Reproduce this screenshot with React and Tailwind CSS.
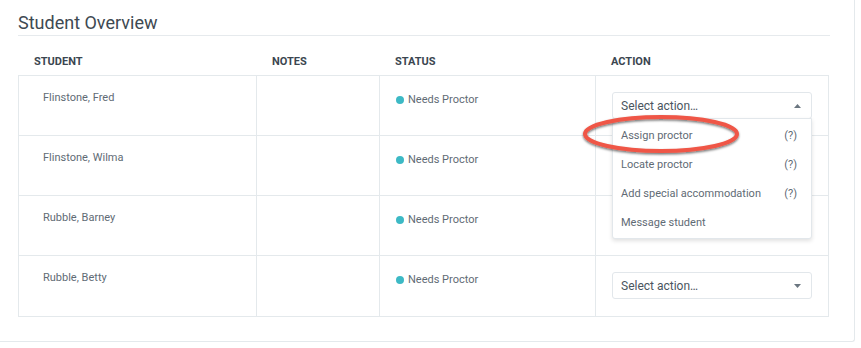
const students = ['Flinstone, Fred', 'Flinstone, Wilma', 'Rubble, Barney', 'Rubble, Betty']

const actions = [
  { label: 'Assign proctor', help: true },
  { label: 'Locate proctor', help: true },
  { label: 'Add special accommodation', help: true },
  { label: 'Message student', help: false },
]

function Caret({ up }) {
  return (
    <svg width="7" height="4" viewBox="0 0 7 4" className="shrink-0">
      {up ? <path d="M0 4 L3.5 0 L7 4 Z" fill="#6b7680" /> : <path d="M0 0 L3.5 4 L7 0 Z" fill="#6b7680" />}
    </svg>
  )
}

function Select({ open }) {
  return (
    <div className="relative w-[200px]">
      <div className="h-[27px] border border-[#e2e7eb] rounded-[3px] bg-white flex items-center justify-between pl-[8px] pr-[10px] text-[12px] text-[#4a5560]">
        <span>Select action…</span>
        <Caret up={open} />
      </div>
      {open && (
        <div className="absolute left-0 top-[26px] w-[200px] bg-white border border-[#e2e7eb] rounded-b-[3px] shadow-[0_2px_4px_rgba(0,0,0,0.12)] pt-[3px] z-10">
          {actions.map((a) => (
            <div key={a.label} className="h-[29px] flex items-center justify-between pl-[8px] pr-[14px] text-[11px] text-[#5f6b75]">
              <span>{a.label}</span>
              {a.help && <span>(?)</span>}
            </div>
          ))}
        </div>
      )}
    </div>
  )
}

export default function App() {
  return (
    <div className="w-[861px] h-[348px] bg-white" style={{ fontFamily: 'Roboto, "Liberation Sans", sans-serif' }}>
      <div className="relative w-[855px] h-[342px] border-r border-b border-[#e4e9ec] rounded-br-[3px] pl-[18px]">
        <div className="w-[812px] pt-[11px] border-b border-[#e6eaed]">
          <h2 className="text-[18px] leading-[24px] text-[#3e4952]">Student Overview</h2>
        </div>

        <div className="grid grid-cols-[238px_123px_216px_1fr] w-[811px] h-[39px] pt-[18px] text-[11px] leading-[16px] font-bold text-[#3b4650] uppercase">
          <div className="pl-[16px]">Student</div>
          <div className="pl-[16px]">Notes</div>
          <div className="pl-[16px]">Status</div>
          <div className="pl-[16px]">Action</div>
        </div>

        <div className="w-[811px] border border-[#e4e9ec]">
          {students.map((name, i) => (
            <div
              key={name}
              className={`grid grid-cols-[237px_123px_216px_1fr] h-[60px] ${i < students.length - 1 ? 'border-b border-[#e4e9ec]' : 'h-[59px]'}`}
            >
              <div className="pl-[24px] pt-[14px] text-[11px] leading-[16px] text-[#5f6b75]">{name}</div>
              <div className="border-l border-[#e4e9ec]" />
              <div className="border-l border-[#e4e9ec] pl-[16px] pt-[16px] flex items-start gap-[4px] text-[11px] leading-[16px] text-[#5f6b75]">
                <span className="w-[8px] h-[8px] rounded-full bg-[#3db9c5] mt-[4px]" />
                <span>Needs Proctor</span>
              </div>
              <div className="border-l border-[#e4e9ec] pl-[16px] pt-[16px]">
                {i === 0 && <Select open />}
                {i === 3 && <Select />}
              </div>
            </div>
          ))}
        </div>

        <svg className="absolute left-[580px] top-[113px] z-20 pointer-events-none" width="164" height="46" viewBox="0 0 164 46">
          <defs>
            <filter id="sh" x="-10%" y="-30%" width="120%" height="160%">
              <feDropShadow dx="0" dy="1.5" stdDeviation="1.2" floodColor="#000" floodOpacity="0.55" />
            </filter>
          </defs>
          <ellipse cx="81" cy="21" rx="76" ry="17" fill="none" stroke="#ef5646" strokeWidth="4" filter="url(#sh)" />
        </svg>
      </div>
    </div>
  )
}
